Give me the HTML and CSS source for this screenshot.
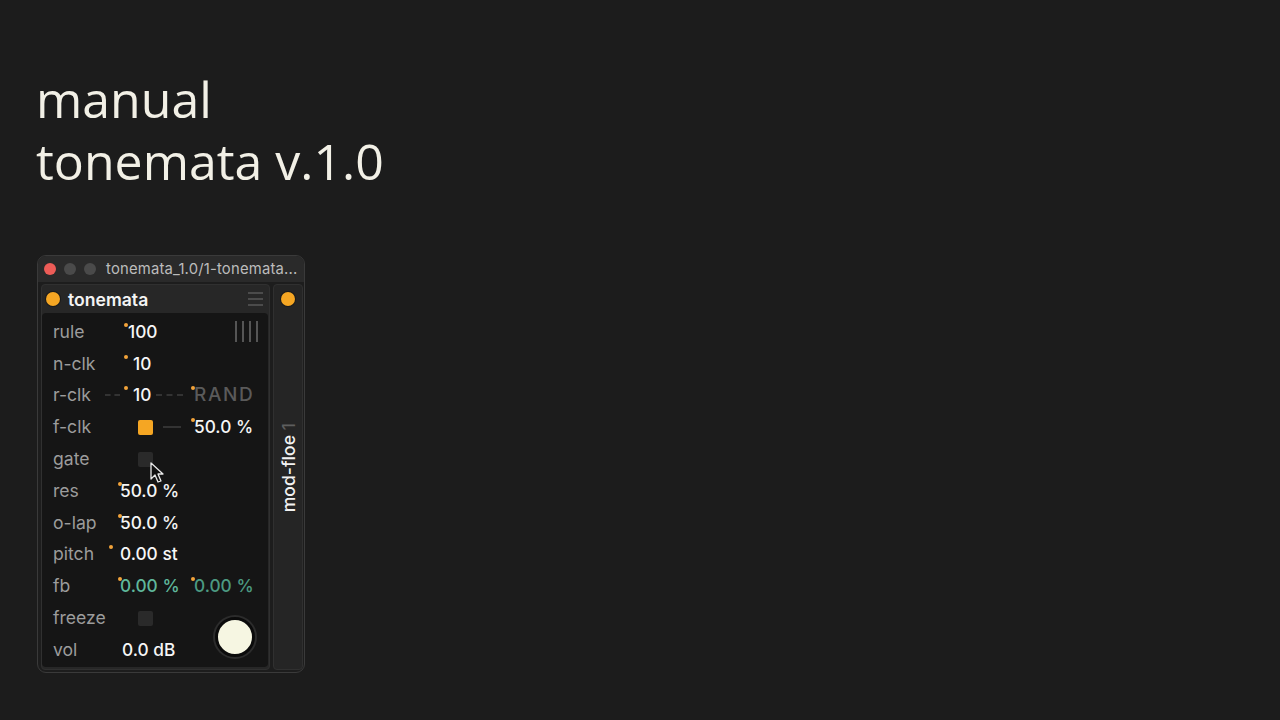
FILE: index.html
```html
<!DOCTYPE html>
<html>
<head>
<meta charset="utf-8">
<link rel="stylesheet" href="styles.css">
</head>
<body>
<div class="page">
  <h1 class="title"><span class="tline">manual</span><span class="tline">tonemata v.1.0</span></h1>

  <div class="window">
    <div class="titlebar">
      <span class="light red"></span>
      <span class="light"></span>
      <span class="light"></span>
      <span class="wintitle">tonemata_1.0/1-tonemata...</span>
    </div>
    <div class="winbody">
      <div class="device">
        <div class="devhead">
          <span class="power"></span>
          <span class="devname">tonemata</span>
          <span class="burger"><i></i><i></i><i></i></span>
        </div>
        <div class="panel">
          <div class="lbl">rule</div>
          <div class="c2"><span class="val dot d2 at19">100</span></div>
          <div class="c3"><span class="bars"><i></i><i></i><i></i><i></i></span></div>

          <div class="lbl">n-clk</div>
          <div class="c2"><span class="val dot d7 at24">10</span></div>
          <div class="c3"></div>

          <div class="lbl">r-clk</div>
          <div class="c2"><span class="cord first"></span><span class="val dot d7 at13">10</span><span class="cord second"></span></div>
          <div class="c3"><span class="val dot d1 at9 dim">RAND</span></div>

          <div class="lbl">f-clk</div>
          <div class="c2"><span class="sq on at29"></span><span class="wire"></span></div>
          <div class="c3"><span class="val dot d1 at9">50.0 %</span></div>

          <div class="lbl">gate</div>
          <div class="c2"><span class="sq at29"><svg class="cursor" width="16" height="22" viewBox="0 0 16 22"><path d="M1 1 L1 17 L5 13 L8 20 L11 19 L8 12 L13 12 Z" fill="#111" stroke="#e8e8e8" stroke-width="1.3" stroke-linejoin="round"/></svg></span></div>
          <div class="c3"></div>

          <div class="lbl">res</div>
          <div class="c2"><span class="val dot d0 at11">50.0 %</span></div>
          <div class="c3"></div>

          <div class="lbl">o-lap</div>
          <div class="c2"><span class="val dot d0 at11">50.0 %</span></div>
          <div class="c3"></div>

          <div class="lbl">pitch</div>
          <div class="c2"><span class="val dot d9 at11">0.00 st</span></div>
          <div class="c3"></div>

          <div class="lbl">fb</div>
          <div class="c2"><span class="val dot d0 at11 teal">0.00 %</span></div>
          <div class="c3"><span class="val dot d1 at9 teal2">0.00 %</span></div>

          <div class="lbl">freeze</div>
          <div class="c2"><span class="sq at29"></span></div>
          <div class="knobcell"><span class="knob"></span></div>

          <div class="lbl">vol</div>
          <div class="c2"><span class="val at13">0.0 dB</span></div>
        </div>
      </div>
      <div class="strip">
        <span class="power"></span>
        <span class="vtext">mod-floe <span class="num">1</span></span>
      </div>
    </div>
  </div>
</div>
</body>
</html>
```

FILE: styles.css
```css
html, body {
  margin: 0;
  padding: 0;
  background: #1c1c1c;
}
body {
  width: 1280px;
  height: 720px;
  overflow: hidden;
  font-family: "Inter", "Noto Sans", sans-serif;
}
.page {
  padding-left: 36px;
}
.title {
  margin: 77px 0 0 0;
  font-family: "Open Sans", "Noto Sans", sans-serif;
  font-weight: 400;
  font-size: 50px;
  line-height: 44px;
  color: #f2f0e6;
  display: flex;
  flex-direction: column;
  gap: 18px;
}
.tline {
  display: block;
  height: 44px;
}
.window {
  margin-top: 72px;
  margin-left: 1px;
  width: 268px;
  height: 418px;
  box-sizing: border-box;
  border: 1px solid #3a3a3a;
  border-radius: 9px;
  background: #1d1d1d;
  display: flex;
  flex-direction: column;
  overflow: hidden;
}
.titlebar {
  height: 26px;
  flex: none;
  background: #2a2a2a;
  display: flex;
  align-items: center;
  padding-left: 6px;
  gap: 8px;
}
.light {
  width: 12px;
  height: 12px;
  border-radius: 50%;
  background: #4a4a4a;
  flex: none;
}
.light.red {
  background: #ed5c57;
}
.wintitle {
  margin-left: 2px;
  font-size: 14.8px;
  letter-spacing: 0.2px;
  color: #bcbcbc;
  white-space: nowrap;
}
.winbody {
  flex: 1;
  display: flex;
  gap: 3px;
  padding: 2px 1px 2px 3px;
}
.device {
  width: 229px;
  box-sizing: border-box;
  background: #272727;
  border: 1px solid #303030;
  border-radius: 4px;
  display: flex;
  flex-direction: column;
}
.devhead {
  height: 28px;
  display: flex;
  align-items: center;
  padding-left: 4px;
  gap: 8px;
}
.power {
  width: 14px;
  height: 14px;
  border-radius: 50%;
  background: #f5a623;
  box-shadow: 0 0 0 1px #1a1a1a;
  flex: none;
}
.devname {
  color: #f4f4f4;
  font-weight: 600;
  font-size: 17.6px;
}
.burger {
  margin-left: auto;
  margin-right: 6px;
  width: 15px;
  display: flex;
  flex-direction: column;
  gap: 4px;
}
.burger i {
  display: block;
  height: 2px;
  background: #4b4b4b;
}
.panel {
  flex: 1;
  margin: 0 1px 2px 0;
  background: #151515;
  border-radius: 4px;
  padding: 3px 10px 0 11px;
  display: grid;
  grid-template-columns: 56px 76px 1fr;
  grid-auto-rows: 31.8px;
  align-items: center;
}
.lbl {
  color: #9c9c9c;
  font-size: 17.6px;
  line-height: 20px;
}
.c2, .c3 {
  display: flex;
  align-items: center;
  height: 100%;
}
.val {
  position: relative;
  color: #f6f6f6;
  font-size: 17.3px;
  font-weight: 500;
  line-height: 20px;
  white-space: nowrap;
}
.val.dot::before {
  content: "";
  position: absolute;
  top: 1px;
  width: 4px;
  height: 4px;
  border-radius: 50%;
  background: #f2a33a;
}
.d0::before { left: -2px; }
.d1::before { left: -3px; }
.d2::before { left: -4px; }
.d7::before { left: -9px; }
.d9::before { left: -11px; }
.at9 { margin-left: 9px; }
.at11 { margin-left: 11px; }
.at13 { margin-left: 13px; }
.at19 { margin-left: 19px; }
.at24 { margin-left: 24px; }
.at29 { margin-left: 29px; }
.dim {
  color: #5a5a5a;
  font-size: 19px;
  letter-spacing: 1.6px;
}
.teal { color: #5fb89c; }
.teal2 { color: #4c9a82; }
.cord {
  height: 0;
  border-top: 2px dashed #333;
}
.cord.first {
  width: 15px;
  margin-left: -4px;
}
.cord.second {
  width: 27px;
  margin-left: 5px;
}
.wire {
  width: 18px;
  height: 2px;
  background: #333;
  margin-left: 10px;
}
.sq {
  position: relative;
  width: 15px;
  height: 15px;
  border-radius: 2px;
  background: #2a2a2a;
  flex: none;
}
.sq.on {
  background: #f5a623;
}
.cursor {
  position: absolute;
  left: 12px;
  top: 10px;
}
.bars {
  margin-left: auto;
  display: flex;
  gap: 5px;
  height: 21px;
}
.bars i {
  display: block;
  width: 2px;
  background: #555;
}
.knobcell {
  grid-row: span 2;
  grid-column: 3;
  align-self: center;
  justify-self: end;
  margin-top: 6px;
  margin-right: 3px;
}
.knob {
  display: block;
  width: 34px;
  height: 34px;
  border-radius: 50%;
  background: #f6f6e2;
  border: 3px solid #0b0b0b;
  box-shadow: 0 0 0 2px #2c2c2c;
}
.strip {
  width: 30px;
  box-sizing: border-box;
  background: #252525;
  border: 1px solid #303030;
  border-radius: 4px;
  display: flex;
  flex-direction: column;
  align-items: center;
  padding-top: 7px;
}
.vtext {
  margin-top: 117px;
  writing-mode: vertical-rl;
  transform: rotate(180deg);
  color: #f2f2f2;
  font-size: 17.6px;
  font-weight: 500;
  white-space: nowrap;
}
.vtext .num {
  color: #5e5e5e;
}
```
